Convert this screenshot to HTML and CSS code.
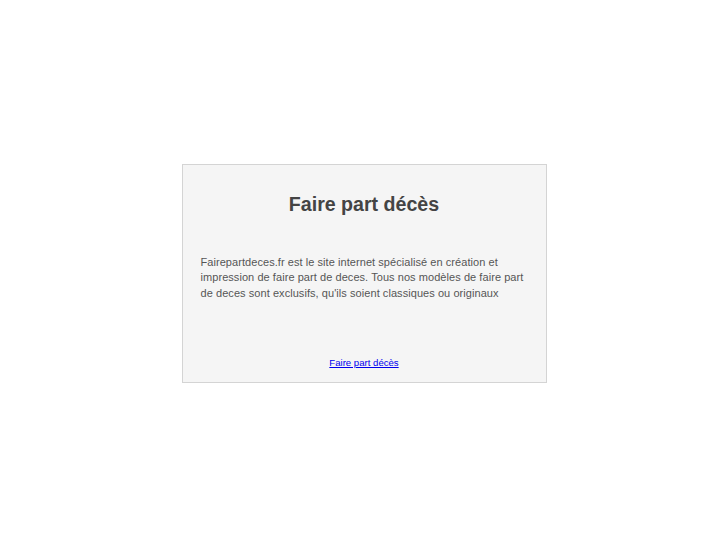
FILE: index.html
```html
<!DOCTYPE html>
<html lang="fr">
<head>
<meta charset="utf-8">
<title>Faire part décès</title>
<link rel="stylesheet" href="styles.css">
</head>
<body>
<div class="page">
  <div class="box">
    <h1 class="title">Faire part décès</h1>
    <p class="text">Fairepartdeces.fr est le site internet spécialisé en création et impression de faire part de deces. Tous nos modèles de faire part de deces sont exclusifs, qu'ils soient classiques ou originaux</p>
    <div class="footer"><a class="link" href="#">Faire part décès</a></div>
  </div>
</div>
</body>
</html>
```
FILE: styles.css
```css
html, body {
  margin: 0;
  padding: 0;
  background: #fff;
}
.page {
  box-sizing: border-box;
  height: 545px;
  padding: 2px 0 0 1px;
  display: flex;
  align-items: center;
  justify-content: center;
  font-family: "Liberation Sans", Arial, sans-serif;
}
.box {
  box-sizing: border-box;
  width: 365px;
  height: 219px;
  background: #f5f5f5;
  border: 1px solid #d4d4d4;
  padding: 26px 18px 0 18px;
}
.title {
  margin: 0;
  font-size: 19.6px;
  line-height: 26px;
  font-weight: bold;
  color: #444;
  text-align: center;
}
.text {
  margin: 37.5px 0 0 0;
  font-size: 11px;
  line-height: 15.5px;
  letter-spacing: 0.06px;
  color: #555;
}
.footer {
  margin-top: 56.4px;
  text-align: center;
  font-size: 9.6px;
  line-height: 12px;
}
.link {
  color: #00e;
}
```
